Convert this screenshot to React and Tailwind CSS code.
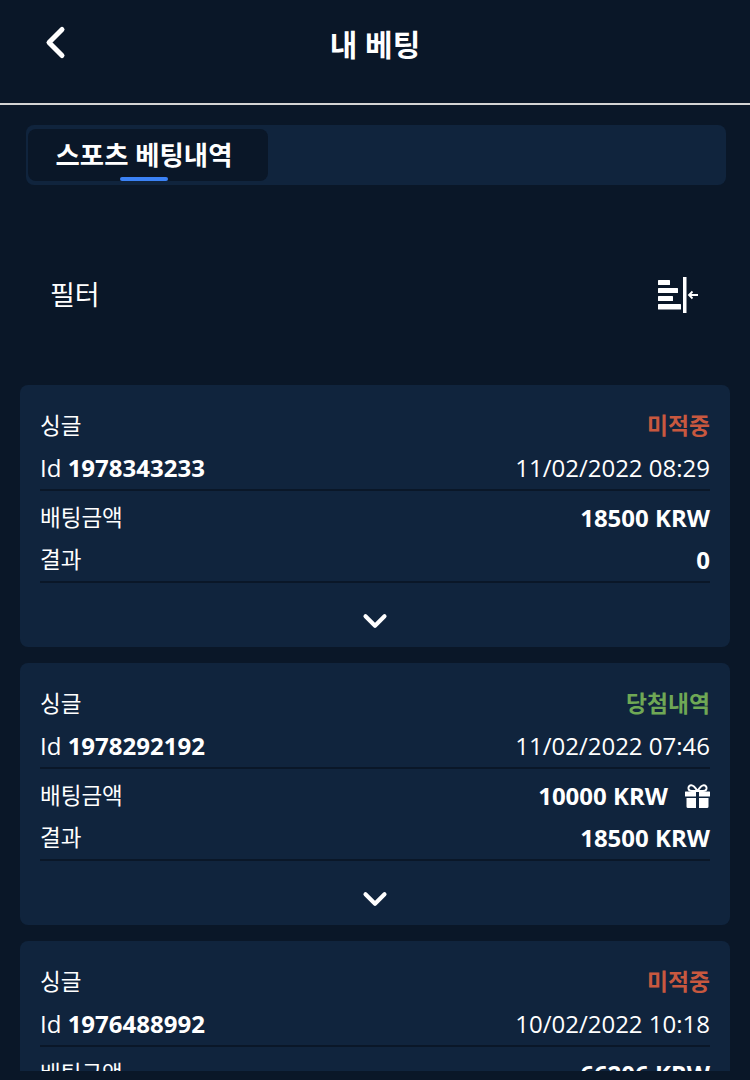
import { ChevronDown } from "lucide-react";

const bets = [
  { id: "1978343233", date: "11/02/2022 08:29", status: "미적중", won: false, stake: "18500 KRW", result: "0" },
  { id: "1978292192", date: "11/02/2022 07:46", status: "당첨내역", won: true, stake: "10000 KRW", result: "18500 KRW", gift: true },
  { id: "1976488992", date: "10/02/2022 10:18", status: "미적중", won: false, stake: "66206 KRW", result: "0" },
];

function GiftIcon() {
  return (
    <svg width="25" height="24" viewBox="0 0 25 24" fill="#fff" className="ml-[17px]">
      <path d="M0.5 7.5h10.5v5H0.5a.5.5 0 0 1-.5-.5V8a.5.5 0 0 1 .5-.5zM14 7.5h10.5a.5.5 0 0 1 .5.5v4a.5.5 0 0 1-.5.5H14z" />
      <path d="M1.5 14H11v10H3a1.5 1.5 0 0 1-1.5-1.5zM14 14h9.5v8.5A1.5 1.5 0 0 1 22 24h-8z" />
      <path d="M12.5 7C10 3 8 1 6 1.2 4 1.4 3.2 3.2 3.6 5 4 6.500 5.500 7 7 7zM12.500 7C15 3 17 1 19 1.200c2 .2 2.800 2 2.400 3.800C21 6.500 19.500 7 18 7z" fill="none" stroke="#fff" strokeWidth="2" />
    </svg>
  );
}

function FilterIcon() {
  return (
    <svg width="40" height="38" viewBox="0 0 40 38">
      <g fill="#fff">
        <rect x="0" y="4" width="12" height="5" rx="0.5" />
        <rect x="0" y="12" width="20" height="5" rx="0.5" />
        <rect x="0" y="20" width="15" height="5" rx="0.5" />
        <rect x="0" y="28" width="23" height="5.500" rx="0.5" />
        <rect x="25" y="1" width="3.500" height="36" />
      </g>
      <path d="M40 19h-9M34.500 15.500L31 19l3.500 3.500" fill="none" stroke="#fff" strokeWidth="1.800" />
    </svg>
  );
}

function BetCard({ bet }) {
  return (
    <div className="shrink-0 rounded-lg bg-[#10243d] px-5 pt-5">
      <div className="flex h-[42px] items-center justify-between">
        <span className="text-[22.5px]">싱글</span>
        <span className={`text-[22.8px] font-semibold ${bet.won ? "text-[#6fa855]" : "text-[#c8583f]"}`}>{bet.status}</span>
      </div>
      <div className="flex h-[44px] items-center justify-between border-b-2 border-[#0a1728] pb-[1px]">
        <span>
          Id <span className="font-bold">{bet.id}</span>
        </span>
        <span>{bet.date}</span>
      </div>
      <div className="mt-1.5 flex h-[42px] items-center justify-between">
        <span className="text-[22.5px]">배팅금액</span>
        <span className="flex items-center font-bold">
          {bet.stake}
          {bet.gift && <GiftIcon />}
        </span>
      </div>
      <div className="flex h-[44px] items-center justify-between border-b-2 border-[#0a1728] pb-[1px]">
        <span className="text-[22.5px]">결과</span>
        <span className="font-bold">{bet.result}</span>
      </div>
      <div className="flex h-[64px] items-center justify-center pt-[12px]">
        <ChevronDown size={38} strokeWidth={2.6} color="#fff" />
      </div>
    </div>
  );
}

export default function App() {
  return (
    <div className="flex h-[1080px] w-[750px] flex-col overflow-hidden bg-[#0a1728] pb-[9px] font-['Open_Sans','Noto_Sans_CJK_KR',sans-serif] text-[24px] leading-[32px] text-white">
      <header className="relative flex h-[105px] shrink-0 items-start justify-center border-b-2 border-[#d4d4d4] pt-[25px]">
        <svg width="24" height="36" viewBox="0 0 24 36" className="absolute left-[44px] top-[25px]">
          <path d="M18 4.500L5 17.500l13 13" fill="none" stroke="#fff" strokeWidth="5" strokeLinecap="round" strokeLinejoin="round" />
        </svg>
        <h1 className="text-[30px] leading-[40px] font-semibold">내 베팅</h1>
      </header>

      <div className="mx-[26px] mt-5 flex h-[60px] w-[700px] shrink-0 items-start rounded-lg bg-[#10243d] p-[2px] pt-1">
        <div className="relative flex h-[52px] w-[240px] items-start justify-center rounded-lg bg-[#0a1728] pt-[6px] pr-[8px] text-[26.400px] leading-[40px] font-semibold">
          스포츠 베팅내역
          <span className="absolute bottom-0 left-[92px] h-1 w-12 rounded-sm bg-[#3b82f6]" />
        </div>
      </div>

      <div className="flex h-[200px] shrink-0 items-center justify-between pt-5 pr-[52px] pl-[50px]">
        <span className="text-[27px]">필터</span>
        <FilterIcon />
      </div>

      <div className="mx-5 flex min-h-0 flex-1 flex-col gap-4 overflow-hidden">
        {bets.map((bet) => (
          <BetCard key={bet.id} bet={bet} />
        ))}
      </div>
    </div>
  );
}
